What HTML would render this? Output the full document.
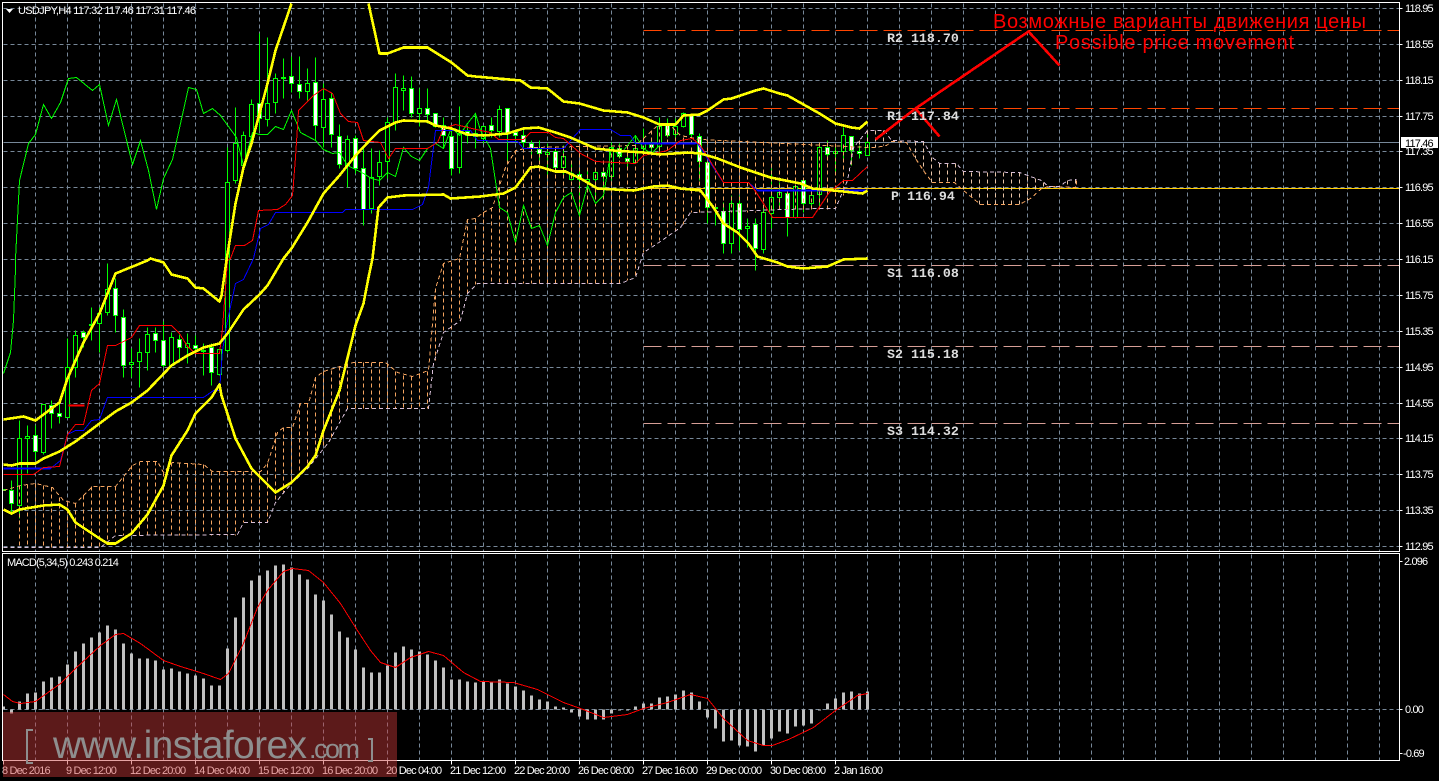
<!DOCTYPE html>
<html>
<head>
<meta charset="utf-8">
<title>USDJPY,H4</title>
<style>
html,body{margin:0;padding:0;background:#000;width:1439px;height:781px;overflow:hidden}
svg{display:block}
.t{font-family:"Liberation Sans",sans-serif;font-size:11px;letter-spacing:-.85px;fill:#fff}
.m{font-family:"Liberation Mono",monospace;font-size:13.3px;font-weight:bold;fill:#ddd}
.r{font-family:"Liberation Sans",sans-serif;font-size:20px;fill:#f00}
</style>
</head>
<body>
<svg width="1439" height="781" viewBox="0 0 1439 781" xmlns="http://www.w3.org/2000/svg">
<rect width="1439" height="781" fill="#000"/>
<g transform="translate(.5 .5)" fill="none" shape-rendering="crispEdges">
<!-- grid -->
<path stroke="#778899" stroke-dasharray="4 3" d="M3 8H1399M3 44H1399M3 80H1399M3 116H1399M3 151H1399M3 187H1399M3 223H1399M3 259H1399M3 295H1399M3 331H1399M3 367H1399M3 403H1399M3 438H1399M3 474H1399M3 510H1399M3 546H1399M3 709H1399"/>
<path stroke="#778899" stroke-dasharray="4 3" d="M35 3V551M67 3V551M99 3V551M131 3V551M163 3V551M195 3V551M227 3V551M259 3V551M291 3V551M323 3V551M355 3V551M387 3V551M419 3V551M451 3V551M483 3V551M515 3V551M547 3V551M579 3V551M611 3V551M643 3V551M675 3V551M707 3V551M739 3V551M771 3V551M803 3V551M835 3V551M867 3V551M899 3V551M931 3V551M963 3V551M995 3V551M1027 3V551M1059 3V551M1091 3V551M1123 3V551M1155 3V551M1187 3V551M1219 3V551M1251 3V551M1283 3V551M1315 3V551M1347 3V551M1379 3V551"/>
<path stroke="#778899" stroke-dasharray="4 3" d="M35 554V760M67 554V760M99 554V760M131 554V760M163 554V760M195 554V760M227 554V760M259 554V760M291 554V760M323 554V760M355 554V760M387 554V760M419 554V760M451 554V760M483 554V760M515 554V760M547 554V760M579 554V760M611 554V760M643 554V760M675 554V760M707 554V760M739 554V760M771 554V760M803 554V760M835 554V760M867 554V760M899 554V760M931 554V760M963 554V760M995 554V760M1027 554V760M1059 554V760M1091 554V760M1123 554V760M1155 554V760M1187 554V760M1219 554V760M1251 554V760M1283 554V760M1315 554V760M1347 554V760M1379 554V760"/>
<!-- price line -->
<path stroke="#778899" d="M3 142H1399"/>
<!-- pivots -->
<path stroke="#ff4500" stroke-dasharray="18 6" d="M643 30H1399M643 108H1399"/>
<path stroke="#d69e96" stroke-dasharray="18 6" d="M643 265H1399M643 346H1399M643 423H1399"/>
<path stroke="#ffcc00" d="M643 188H1399"/>
<!-- wicks -->
<path stroke="#00ff00" d="M11 480V513M19 420V518M27 425V473M35 425V460M43 404V454M51 400V428M59 402V423M67 338V417M75 330V377M83 330V347M91 307V340M99 307V352M107 263V315M115 278V332M123 309V377M131 348V377M139 338V387M147 327V370M155 327V352M163 321V367M171 332V367M179 334V362M187 333V363M195 335V350M203 343V375M211 343V385M219 349V375M227 147V352M235 107V183M243 131V165M251 99V143M259 33V130M267 37V126M275 73V113M283 58V98M291 56V92M299 56V98M307 68V100M315 57V140M323 83V147M331 93V147M339 124V168M347 135V187M355 135V173M363 148V225M371 148V213M379 150V185M387 117V178M395 73V130M403 75V110M411 76V117M419 88V126M427 88V123M435 113V127M443 117V147M451 127V175M459 106V173M467 125V143M475 113V148M483 125V143M491 117V137M499 105V137M507 108V160M515 130V142M523 127V147M531 140V157M539 140V160M547 143V175M555 148V170M563 145V177M571 163V180M579 167V217M587 170V190M595 170V195M603 170V187M611 142V180M619 143V158M627 152V167M635 135V163M643 128V153M651 138V155M659 117V153M667 118V137M675 118V137M683 112V127M691 114V137M699 133V180M707 162V223M715 207V225M723 202V253M731 195V253M739 195V250M747 218V247M755 218V270M763 208V253M771 168V228M779 182V208M787 192V236M795 185V218M803 177V212M811 192V205M819 143V205M827 140V157M835 145V175M843 127V162M851 136V165M859 145V158M867 133V155"/>
<!-- white bodies -->
<path stroke="#00ff00" fill="#fff" d="M9 490h4v13h-4zM33 435h4v16h-4zM49 405h4v8h-4zM57 413h4v3h-4zM81 332h4v5h-4zM113 288h4v27h-4zM121 317h4v48h-4zM153 333h4v7h-4zM161 340h4v25h-4zM177 339h4v8h-4zM193 345h4v3h-4zM209 347h4v25h-4zM257 103h4v15h-4zM289 76h4v7h-4zM297 84h4v7h-4zM313 82h4v43h-4zM329 98h4v36h-4zM337 136h4v28h-4zM353 138h4v30h-4zM361 168h4v41h-4zM409 88h4v25h-4zM425 108h4v6h-4zM433 113h4v13h-4zM441 125h4v10h-4zM449 136h4v32h-4zM465 131h4v4h-4zM489 125h4v5h-4zM505 108h4v25h-4zM513 132h4v3h-4zM521 135h4v7h-4zM529 143h4v5h-4zM537 149h4v4h-4zM553 151h4v16h-4zM577 174h4v5h-4zM601 172h4v4h-4zM617 148h4v8h-4zM625 158h4v3h-4zM649 144h4v3h-4zM665 125h4v10h-4zM689 114h4v20h-4zM697 136h4v25h-4zM705 162h4v45h-4zM721 211h4v32h-4zM737 203h4v26h-4zM753 224h4v24h-4zM785 193h4v24h-4zM801 180h4v23h-4zM825 147h4v7h-4zM849 136h4v14h-4zM857 151h4v2h-4z"/>
<!-- hollow bodies -->
<path stroke="#00ff00" fill="#000" d="M3 489h2v1h-2zM17 438h4v67h-4zM25 436h4v2h-4zM41 404h4v48h-4zM65 367h4v50h-4zM73 335h4v32h-4zM89 324h4v1h-4zM97 313h4v10h-4zM105 289h4v23h-4zM129 362h4v2h-4zM137 352h4v9h-4zM145 334h4v18h-4zM169 337h4v28h-4zM185 343h4v4h-4zM201 350h4v1h-4zM217 349h4v25h-4zM225 182h4v168h-4zM233 143h4v37h-4zM241 135h4v30h-4zM249 104h4v32h-4zM265 103h4v16h-4zM273 78h4v24h-4zM281 77h4v1h-4zM305 83h4v8h-4zM321 99h4v28h-4zM345 139h4v26h-4zM369 177h4v31h-4zM377 162h4v14h-4zM385 122h4v39h-4zM393 87h4v35h-4zM401 88h4v2h-4zM417 108h4v5h-4zM457 133h4v34h-4zM473 133h4v3h-4zM481 126h4v12h-4zM497 109h4v22h-4zM545 152h4v2h-4zM561 156h4v11h-4zM569 173h4v6h-4zM585 179h4v2h-4zM593 172h4v7h-4zM609 147h4v29h-4zM633 148h4v14h-4zM641 143h4v5h-4zM657 126h4v20h-4zM673 126h4v8h-4zM681 113h4v13h-4zM713 207h4v1h-4zM729 203h4v40h-4zM745 226h4v2h-4zM761 212h4v37h-4zM769 197h4v16h-4zM777 192h4v5h-4zM793 186h4v31h-4zM809 195h4v8h-4zM817 147h4v47h-4zM833 151h4v2h-4zM841 135h4v16h-4zM865 142h4v13h-4z"/>
<!-- cloud verticals -->
<path stroke="#f4a460" stroke-dasharray="4 3" d="M19 485V547M27 484V547M35 483V547M43 485V547M51 487V547M59 497V547M67 502V547M75 503V547M83 495V547M91 486V547M99 486V547M107 486V540M115 486V535M123 477V535M131 465V535M139 461V535M147 461V535M155 461V535M163 472V535M171 462V535M179 463V535M187 463V535M195 463V535M203 464V535M211 471V535M219 471V535M227 471V535M235 471V535M243 471V522M251 471V522M259 471V522M267 463V522M275 432V502M283 427V492M291 427V484M299 403V474M307 403V467M315 377V460M323 371V445M331 370V437M339 366V420M347 363V408M355 362V408M363 362V408M371 362V408M379 362V408M387 363V408M395 371V408M403 375V408M411 376V408M419 374V408M427 371V408M435 288V360M443 263V332M451 262V330M459 258V320M467 219V293M475 218V284M483 212V283M491 207V283M499 180V283M507 160V283M515 150V283M523 148V283M531 147V283M539 146V283M547 146V283M555 146V283M563 146V283M571 146V283M579 146V283M587 146V283M595 146V283M603 146V283M611 146V283M619 146V283M627 145V280M635 145V277M643 138V252M651 130V245M659 125V240M667 125V235M675 130V230M683 137V224M691 140V212M699 139V212M707 140V212M715 140V212M723 140V212M731 140V212M739 140V212M747 140V212M755 141V212M763 141V212M771 142V209M779 142V209M787 142V209M795 142V209M803 142V209M811 142V209M819 142V209M827 142V209M835 143V208M843 144V195M851 146V165"/>
<path stroke="#e8c4a8" stroke-dasharray="4 3" d="M859 140V146M867 130V147M875 130V147M883 130V145M915 141V158M923 141V170M931 157V182M939 163V182M947 163V182M955 163V182M963 171V190M971 172V199M979 172V204M987 172V204M995 172V204M1003 172V204M1011 172V204M1019 172V204M1027 176V200M1035 178V192M1043 182V187M1067 180V187M1075 179V187"/>
<!-- span lines -->
<path stroke="#f4a460" stroke-dasharray="4 3" d="M3 490L20 485L35 483L52 487L63 500L75 503L92 486L115 486L132 465L140 461L157 461L163 472L172 462L203 464L212 471L260 471L267 463L277 432L283 427L292 427L300 403L308 403L315 377L323 371L343 365L353 362L385 362L397 372L412 376L428 370L435 288L443 263L459 258L467 219L475 218L483 212L492 207L505 167L515 150L530 147L635 145L643 138L657 125L670 125L680 135L700 139L867 147L875 147L886 145L891 141L906 142L915 158L925 173L932 182L954 182L963 190L980 204L1019 204L1030 198L1041 188L1048 186L1076 187V179"/>
<path stroke="#d8bfd8" stroke-dasharray="4 3" d="M3 547L100 547L115 535L237 534L243 522L267 522L275 502L290 484L308 467L328 442L347 408L428 408L433 363L443 332L460 320L467 293L477 283L620 283L635 277L643 252L657 243L680 227L690 212L817 208L835 208L847 180L853 147L867 130L884 130L891 140L923 141L932 157L939 163L956 163L963 171L1019 172L1041 180L1048 186L1059 186L1067 180L1076 179"/>
<!-- chikou -->
<polyline stroke="#00ff00" points="3,373 10,352 13,320 15,268 15,258 19,180 28,143 35,134 43,104 51,118 60,102 68,78 76,77 92,90 99,84 108,125 116,99 132,164 140,140 148,170 156,209 163,178 172,159 188,87 196,89 203,113 212,108 220,115 236,137 243,165 252,132 259,134 267,134 275,126 283,129 291,110 300,132 315,140 323,149 332,153 339,152 347,165 363,173 371,178 379,180 387,172 395,176 403,147 411,156 419,160 427,148 435,143 443,148 451,127 459,135 467,123 475,113 480,130 490,148 499,207 507,212 515,242 523,205 531,228 539,225 547,245 555,212 563,197 571,192 579,215 587,185 595,203 603,195 611,147 619,155 627,145 635,135 643,148 651,153 659,145"/>
<!-- kijun -->
<polyline stroke="#0000ff" points="3,468 50,468 60,460 67,434 75,430 83,430 91,420 99,419 107,397 203,397 213,390 219,390 222,350 227,320 235,283 243,279 253,258 260,228 268,224 275,212 342,212 345,209 412,209 422,204 428,187 435,130 470,130 477,140 517,141 523,148 563,148 580,129 610,129 620,135 630,135 635,143 697,143 723,182 748,182 757,190 867,190" stroke-width="1"/>
<path stroke="#0000ff" stroke-width="2" d="M640 143H695M757 190H867M3 468H50"/>
<!-- tenkan -->
<polyline stroke="#ff0000" points="3,474 33,474 43,467 59,466 67,434 75,424 83,424 91,390 99,383 107,345 115,345 131,337 139,325 171,325 179,333 187,346 195,353 219,353 222,328 227,260 230,258 235,245 244,245 252,240 258,210 277,209 285,204 292,195 295,157 298,110 313,95 323,88 332,93 340,113 348,121 357,122 363,140 380,142 388,158 395,148 427,148 437,142 443,128 455,124 480,130 490,132 498,139 523,139 530,132 548,132 555,137 563,138 580,153 595,161 635,163 643,155 667,150 680,140 692,138 700,145 723,182 748,182 753,188 763,203 772,217 812,217 828,193 843,180 852,180 867,166"/>
<path stroke="#ff0000" stroke-width="2" d="M68 405H84"/>
<!-- bollinger -->
<g stroke="#ffff00" stroke-width="2.6" stroke-linejoin="round">
<polyline points="3,419 23,416 35,420 59,402 67,378 83,342 99,313 115,273 147,260 150,258 163,262 171,274 187,278 195,287 203,288 219,301 221,295 226,260 235,203 243,167 251,143 267,83 275,50 291,3"/>
<polyline points="368,3 379,53 387,53 403,47 427,47 451,62 467,75 475,76 520,80 530,87 547,88 563,101 579,103 603,110 627,112 643,117 659,124 675,124 683,115 699,114 707,110 723,99 731,98 755,90 763,88 779,93 787,95 803,104 819,113 835,123 851,127 859,128 867,121"/>
<polyline points="3,464 11,465 19,463 35,463 43,458 59,451 75,441 99,423 115,411 131,402 147,390 171,365 187,355 203,347 219,343 227,333 243,309 259,294 267,285 283,258 291,248 307,222 323,193 339,175 355,155 371,138 379,130 395,122 403,120 427,121 435,125 451,128 467,134 483,135 507,133 523,128 538,127 555,132 570,137 595,148 613,150 643,152 660,154 687,152 700,153 717,158 740,167 770,177 800,183 812,188 843,191 862,193 867,190"/>
<polyline points="3,509 11,513 19,509 43,505 59,504 67,509 75,522 99,538 107,543 115,543 131,533 147,514 163,485 171,455 187,430 195,413 211,397 219,384 221,395 235,438 251,468 275,492 291,482 307,466 315,455 323,430 339,390 355,325 363,303 368,277 372,258 378,207 387,197 403,195 443,194 450,198 480,196 503,193 515,187 530,167 538,166 555,171 565,171 580,178 597,188 633,190 653,186 667,185 680,188 700,190 713,207 723,223 737,232 748,243 757,256 777,262 787,266 803,268 827,266 843,259 867,258"/>
</g>
<!-- red arrows -->
<polyline stroke="#ff0000" stroke-width="2.6" points="875,139 915,108 939,136"/>
<polyline stroke="#ff0000" stroke-width="2.6" points="915,108 1028,31 1059,65"/>
<!-- macd bars -->
<path stroke="#c0c0c0" stroke-width="3" d="M3 706V709M11 713V709M19 701V709M27 693V709M35 692V709M43 681V709M51 677V709M59 676V709M67 664V709M75 651V709M83 643V709M91 637V709M99 632V709M107 625V709M115 629V709M123 643V709M131 653V709M139 658V709M147 658V709M155 660V709M163 669V709M171 668V709M179 671V709M187 673V709M195 675V709M203 678V709M211 685V709M219 685V709M227 648V709M235 617V709M243 597V709M251 580V709M259 575V709M267 570V709M275 565V709M283 564V709M291 567V709M299 574V709M307 579V709M315 594V709M323 600V709M331 614V709M339 631V709M347 637V709M355 649V709M363 667V709M371 672V709M379 672V709M387 665V709M395 652V709M403 646V709M411 649V709M419 651V709M427 654V709M435 660V709M443 667V709M451 679V709M459 679V709M467 681V709M475 682V709M483 681V709M491 682V709M499 679V709M507 683V709M515 686V709M523 690V709M531 695V709M539 699V709M547 701V709M555 706V709M563 707V709M571 712V709M579 716V709M587 719V709M595 719V709M603 719V709M611 713V709M619 710V709M627 710V709M635 706V709M643 703V709M651 703V709M659 697V709M667 696V709M675 694V709M683 690V709M691 692V709M699 701V709M707 717V709M715 728V709M723 741V709M731 740V709M739 745V709M747 746V709M755 751V709M763 745V709M771 738V709M779 731V709M787 733V709M795 726V709M803 725V709M811 723V709M819 710V709M827 703V709M835 698V709M843 692V709M851 691V709M859 693V709M867 691V709"/>
<!-- macd signal -->
<polyline stroke="#ff0000" points="3,694 12,701 20,703 35,701 60,683 75,668 100,645 115,634 123,633 140,643 163,660 180,666 203,673 220,679 228,673 243,643 257,607 267,590 283,571 292,568 308,570 323,582 340,603 355,627 370,650 380,662 395,667 410,657 428,651 443,655 463,672 480,681 513,682 537,689 563,702 580,708 603,717 627,714 643,708 667,702 690,694 707,698 723,718 747,740 763,745 772,745 788,739 813,727 835,710 857,695 867,693"/>
<!-- borders and ticks -->
<path stroke="#fff" d="M2 2H1399V551H2ZM2 553H1399V760H2Z"/>
<path stroke="#fff" d="M1399 8h3M1399 44h3M1399 80h3M1399 116h3M1399 151h3M1399 187h3M1399 223h3M1399 259h3M1399 295h3M1399 331h3M1399 367h3M1399 403h3M1399 438h3M1399 474h3M1399 510h3M1399 546h3M1399 561h3M1399 709h3M1399 753h3M3 760v4M67 760v4M131 760v4M195 760v4M259 760v4M323 760v4M387 760v4M451 760v4M515 760v4M579 760v4M643 760v4M707 760v4M771 760v4M835 760v4"/>
</g>
<!-- header -->
<path d="M6 9h7l-3.5 4z" fill="#fff"/>
<text class="t" x="18" y="14" textLength="178" style="letter-spacing:0">USDJPY,H4  117.32 117.46 117.31 117.46</text>
<text class="t" x="7" y="566">MACD(5,34,5) 0.243 0.214</text>
<!-- price labels -->
<g class="t">
<text class="t" x="1405" y="12">118.95</text>
<text class="t" x="1405" y="48">118.55</text>
<text class="t" x="1405" y="84">118.15</text>
<text class="t" x="1405" y="120">117.75</text>
<text class="t" x="1405" y="155">117.35</text>
<text class="t" x="1405" y="191">116.95</text>
<text class="t" x="1405" y="227">116.55</text>
<text class="t" x="1405" y="263">116.15</text>
<text class="t" x="1405" y="299">115.75</text>
<text class="t" x="1405" y="335">115.35</text>
<text class="t" x="1405" y="371">114.95</text>
<text class="t" x="1405" y="407">114.55</text>
<text class="t" x="1405" y="442">114.15</text>
<text class="t" x="1405" y="478">113.75</text>
<text class="t" x="1405" y="514">113.35</text>
<text class="t" x="1405" y="550">112.95</text>
<text class="t" x="1404" y="565">2.096</text>
<text class="t" x="1405" y="713">0.00</text>
<text class="t" x="1403" y="757">-0.69</text>
</g>
<rect x="1401" y="137" width="37" height="11" fill="#fff"/>
<text class="t" x="1405" y="147" style="fill:#000">117.46</text>
<!-- time labels -->
<text class="t" x="2" y="774">8 Dec 2016</text>
<text class="t" x="66" y="774">9 Dec 12:00</text>
<text class="t" x="130" y="774">12 Dec 20:00</text>
<text class="t" x="194" y="774">14 Dec 04:00</text>
<text class="t" x="258" y="774">15 Dec 12:00</text>
<text class="t" x="322" y="774">16 Dec 20:00</text>
<text class="t" x="386" y="774">20 Dec 04:00</text>
<text class="t" x="450" y="774">21 Dec 12:00</text>
<text class="t" x="514" y="774">22 Dec 20:00</text>
<text class="t" x="578" y="774">26 Dec 08:00</text>
<text class="t" x="642" y="774">27 Dec 16:00</text>
<text class="t" x="706" y="774">29 Dec 00:00</text>
<text class="t" x="770" y="774">30 Dec 08:00</text>
<text class="t" x="834" y="774">2 Jan 16:00</text>
<!-- pivot labels -->
<text class="m" x="887" y="42">R2 118.70</text>
<text class="m" x="887" y="120">R1 117.84</text>
<text class="m" x="891" y="200">P 116.94</text>
<text class="m" x="887" y="277">S1 116.08</text>
<text class="m" x="887" y="358">S2 115.18</text>
<text class="m" x="887" y="435">S3 114.32</text>
<!-- annotation -->
<text class="r" x="993" y="28" textLength="373">Возможные варианты движения цены</text>
<text class="r" x="1055" y="49" textLength="239">Possible price movement</text>
<!-- watermark -->
<rect x="3" y="712" width="394" height="65" fill="rgba(200,56,56,.46)"/>
<g fill="#8e8e8e" font-family="'Liberation Sans',sans-serif">
<text x="53" y="758" font-size="39" textLength="254">www.instaforex</text>
<text x="309" y="758" font-size="27" textLength="51">.com</text>
</g>
<path d="M33 730H27V763H33M368 739H372V761H368" fill="none" stroke="#8e8e8e" stroke-width="2"/>
</svg>
</body>
</html>
